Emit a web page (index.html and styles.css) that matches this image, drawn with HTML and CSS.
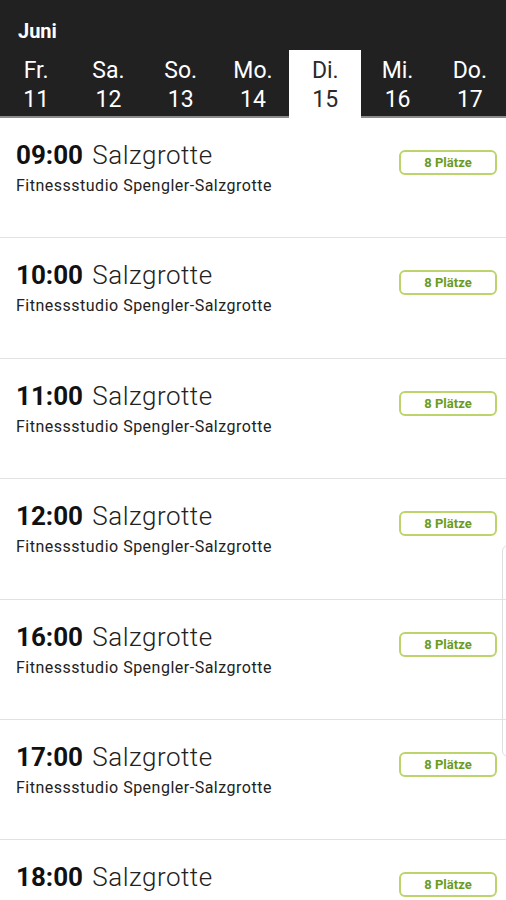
FILE: index.html
```html
<!DOCTYPE html>
<html lang="de">
<head>
    <meta charset="UTF-8">
    <meta name="viewport" content="width=device-width, initial-scale=1.0">
    <title>Kursplan</title>
    <link rel="stylesheet" href="styles.css">
</head>
<body>
    <header class="header">
        <div class="month">Juni</div>
        <nav class="tabs">
            <div class="tab"><span>Fr.</span><span>11</span></div>
            <div class="tab"><span>Sa.</span><span>12</span></div>
            <div class="tab"><span>So.</span><span>13</span></div>
            <div class="tab"><span>Mo.</span><span>14</span></div>
            <div class="tab active"><span>Di.</span><span>15</span></div>
            <div class="tab"><span>Mi.</span><span>16</span></div>
            <div class="tab"><span>Do.</span><span>17</span></div>
        </nav>
    </header>

    <main class="list">
        <div class="row">
            <div class="info">
                <div class="title"><b>09:00</b> <span>Salzgrotte</span></div>
                <div class="place">Fitnessstudio Spengler-Salzgrotte</div>
            </div>
            <div class="badge">8 Plätze</div>
        </div>
        <div class="row">
            <div class="info">
                <div class="title"><b>10:00</b> <span>Salzgrotte</span></div>
                <div class="place">Fitnessstudio Spengler-Salzgrotte</div>
            </div>
            <div class="badge">8 Plätze</div>
        </div>
        <div class="row">
            <div class="info">
                <div class="title"><b>11:00</b> <span>Salzgrotte</span></div>
                <div class="place">Fitnessstudio Spengler-Salzgrotte</div>
            </div>
            <div class="badge">8 Plätze</div>
        </div>
        <div class="row">
            <div class="info">
                <div class="title"><b>12:00</b> <span>Salzgrotte</span></div>
                <div class="place">Fitnessstudio Spengler-Salzgrotte</div>
            </div>
            <div class="badge">8 Plätze</div>
        </div>
        <div class="row">
            <div class="info">
                <div class="title"><b>16:00</b> <span>Salzgrotte</span></div>
                <div class="place">Fitnessstudio Spengler-Salzgrotte</div>
            </div>
            <div class="badge">8 Plätze</div>
        </div>
        <div class="row">
            <div class="info">
                <div class="title"><b>17:00</b> <span>Salzgrotte</span></div>
                <div class="place">Fitnessstudio Spengler-Salzgrotte</div>
            </div>
            <div class="badge">8 Plätze</div>
        </div>
        <div class="row">
            <div class="info">
                <div class="title"><b>18:00</b> <span>Salzgrotte</span></div>
                <div class="place">Fitnessstudio Spengler-Salzgrotte</div>
            </div>
            <div class="badge">8 Plätze</div>
        </div>
    </main>

    <div class="scroll-hint"></div>
</body>
</html>
```

FILE: styles.css
```css
body {
    margin: 0;
    padding: 0;
    height: 100vh;
    overflow: hidden;
    background: #fff;
    font-family: Roboto, "Noto Sans", Arial, sans-serif;
    color: #1a1a1a;
}

.header {
    background: #212121;
    color: #fff;
    padding-top: 18px;
}

.month {
    font-size: 20px;
    font-weight: bold;
    line-height: 26px;
    padding-left: 18px;
    margin-bottom: 6px;
}

.tabs {
    display: grid;
    grid-template-columns: repeat(7, 1fr);
    border-bottom: 2px solid #8c8c8c;
}

.tab {
    display: flex;
    flex-direction: column;
    align-items: center;
    font-size: 23px;
    line-height: 29px;
    padding: 6px 0 2px;
}

.tab.active {
    background: #fff;
    color: #2a2a2a;
    margin-bottom: -2px;
    padding-bottom: 4px;
    position: relative;
}

.row {
    display: flex;
    justify-content: space-between;
    align-items: flex-start;
    height: 119.4px;
    box-sizing: content-box;
    border-bottom: 1px solid #e2e2e2;
    padding: 0 9px 0 16px;
}

.info {
    padding-top: 21px;
}

.title {
    font-size: 26px;
    line-height: 32px;
    font-weight: 300;
    color: #222;
}

.title b {
    font-weight: bold;
    color: #111;
    margin-right: 3px;
}

.title span {
    letter-spacing: 0.5px;
}

.place {
    font-size: 16px;
    line-height: 20px;
    letter-spacing: 0.5px;
    margin-top: 5px;
    color: #222;
}

.badge {
    margin-top: 32px;
    width: 94px;
    height: 21px;
    border: 2px solid #bcd46c;
    border-radius: 6px;
    color: #6a9b22;
    font-size: 13px;
    font-weight: bold;
    line-height: 21px;
    text-align: center;
}

.scroll-hint {
    position: fixed;
    top: 545px;
    right: -8px;
    width: 10px;
    height: 210px;
    border: 1px solid #dedede;
    border-radius: 6px;
}
```
